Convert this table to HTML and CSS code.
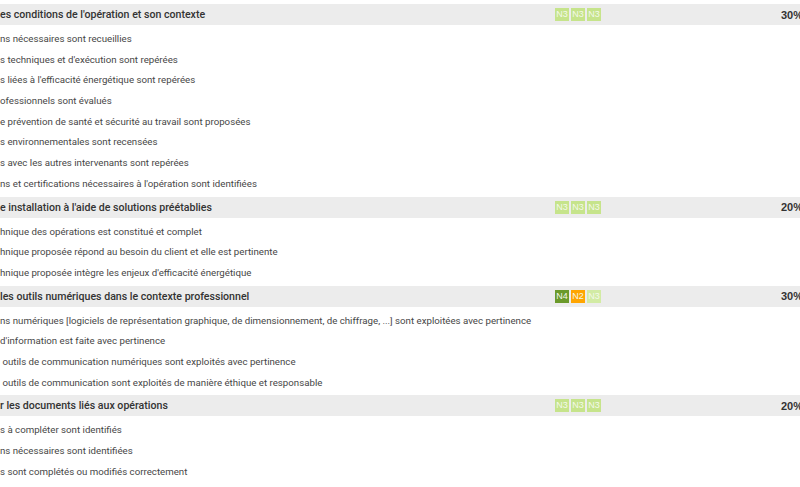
FILE: index.html
```html
<!DOCTYPE html>
<html lang="fr">
<head>
<meta charset="utf-8">
<link rel="stylesheet" href="styles.css">
</head>
<body>
<div class="page">
  <section class="section">
    <div class="head">
      <div class="title">es conditions de l'opération et son contexte</div>
      <div class="badges"><span class="badge n3">N3</span><span class="badge n3">N3</span><span class="badge n3">N3</span></div>
      <div class="pct">30%</div>
    </div>
    <ul class="items">
      <li>ns nécessaires sont recueillies</li>
      <li>s techniques et d'exécution sont repérées</li>
      <li>s liées à l'efficacité énergétique sont repérées</li>
      <li>ofessionnels sont évalués</li>
      <li>e prévention de santé et sécurité au travail sont proposées</li>
      <li>s environnementales sont recensées</li>
      <li>s avec les autres intervenants sont repérées</li>
      <li>ns et certifications nécessaires à l'opération sont identifiées</li>
    </ul>
  </section>
  <section class="section">
    <div class="head">
      <div class="title">e installation à l'aide de solutions préétablies</div>
      <div class="badges"><span class="badge n3">N3</span><span class="badge n3">N3</span><span class="badge n3">N3</span></div>
      <div class="pct">20%</div>
    </div>
    <ul class="items">
      <li>hnique des opérations est constitué et complet</li>
      <li>hnique proposée répond au besoin du client et elle est pertinente</li>
      <li>hnique proposée intègre les enjeux d'efficacité énergétique</li>
    </ul>
  </section>
  <section class="section">
    <div class="head">
      <div class="title">les outils numériques dans le contexte professionnel</div>
      <div class="badges"><span class="badge n4">N4</span><span class="badge n2">N2</span><span class="badge n3 pale">N3</span></div>
      <div class="pct">30%</div>
    </div>
    <ul class="items">
      <li>ns numériques [logiciels de représentation graphique, de dimensionnement, de chiffrage, ...] sont exploitées avec pertinence</li>
      <li>d'information est faite avec pertinence</li>
      <li>&nbsp;outils de communication numériques sont exploités avec pertinence</li>
      <li>&nbsp;outils de communication sont exploités de manière éthique et responsable</li>
    </ul>
  </section>
  <section class="section">
    <div class="head">
      <div class="title">r les documents liés aux opérations</div>
      <div class="badges"><span class="badge n3">N3</span><span class="badge n3">N3</span><span class="badge n3">N3</span></div>
      <div class="pct">20%</div>
    </div>
    <ul class="items">
      <li>s à compléter sont identifiés</li>
      <li>ns nécessaires sont identifiées</li>
      <li>s sont complétés ou modifiés correctement</li>
    </ul>
  </section>
</div>
</body>
</html>
```
FILE: styles.css
```css
html, body {
  margin: 0;
  padding: 0;
  overflow: hidden;
  background: #fff;
}
body {
  font-family: Roboto, "Liberation Sans", sans-serif;
  color: #464646;
}
.page {
  width: 805px;
  padding-top: 4px;
}
.head {
  display: flex;
  align-items: center;
  height: 21px;
  background: #ececec;
}
.title {
  flex: 1;
  font-size: 10.6px;
  font-weight: 500;
  color: #333;
  white-space: nowrap;
}
.badges {
  display: flex;
  gap: 2px;
}
.badge {
  width: 14px;
  height: 13px;
  line-height: 13px;
  text-align: center;
  font-family: "Liberation Sans", Arial, sans-serif;
  font-size: 9px;
  color: #f4f9ea;
}
.n3 { background: #c6e48b; }
.n3.pale { background: #d2eba4; }
.n4 { background: #6b9a2a; }
.n2 { background: #ffa500; }
.pct {
  box-sizing: border-box;
  width: 204px;
  padding-right: 2px;
  text-align: right;
  font-family: "Liberation Sans", Arial, sans-serif;
  font-weight: bold;
  font-size: 11px;
  color: #333;
}
.items {
  list-style: none;
  margin: 0;
  padding: 4px 0 2px;
}
.items li {
  height: 20.7px;
  line-height: 20.7px;
  font-size: 9.7px;
  white-space: nowrap;
}
```
